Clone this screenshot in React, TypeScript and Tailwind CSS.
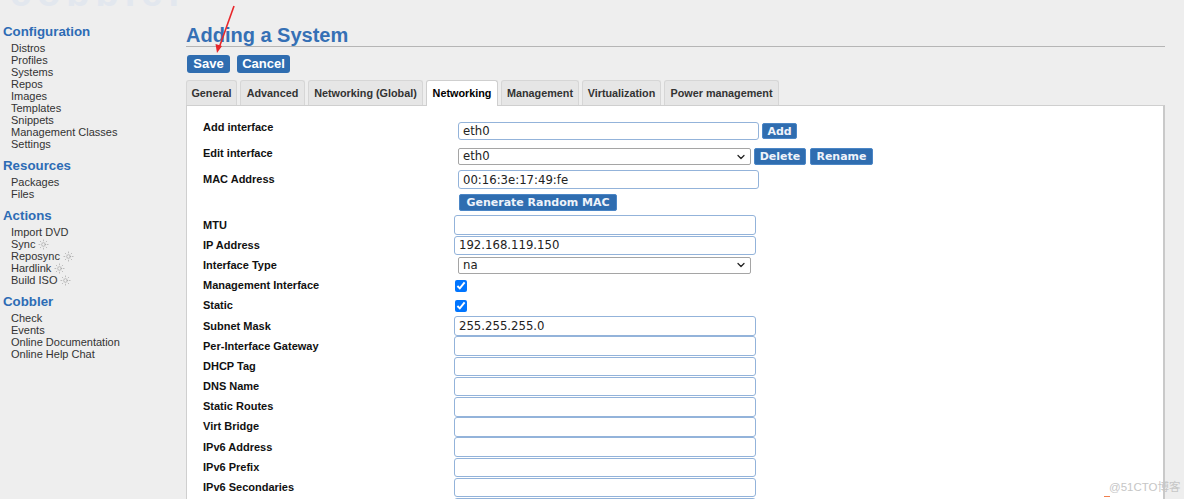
import { ChevronDown, Sun } from "lucide-react";

const sections = [
  {
    title: "Configuration",
    links: ["Distros", "Profiles", "Systems", "Repos", "Images", "Templates", "Snippets", "Management Classes", "Settings"],
  },
  { title: "Resources", links: ["Packages", "Files"] },
  { title: "Actions", links: ["Import DVD", "Sync*", "Reposync*", "Hardlink*", "Build ISO*"] },
  { title: "Cobbler", links: ["Check", "Events", "Online Documentation", "Online Help Chat"] },
];

const tabs: { name: string; w: string }[] = [
  { name: "General", w: "w-[51px]" },
  { name: "Advanced", w: "w-[65px]" },
  { name: "Networking (Global)", w: "w-[115px]" },
  { name: "Networking", w: "w-[72px]" },
  { name: "Management", w: "w-[78px]" },
  { name: "Virtualization", w: "w-[79px]" },
  { name: "Power management", w: "w-[115px]" },
];

const rows: { label: string; kind: "input" | "select" | "check"; value?: string }[] = [
  { label: "MTU", kind: "input" },
  { label: "IP Address", kind: "input", value: "192.168.119.150" },
  { label: "Interface Type", kind: "select", value: "na" },
  { label: "Management Interface", kind: "check" },
  { label: "Static", kind: "check" },
  { label: "Subnet Mask", kind: "input", value: "255.255.255.0" },
  { label: "Per-Interface Gateway", kind: "input" },
  { label: "DHCP Tag", kind: "input" },
  { label: "DNS Name", kind: "input" },
  { label: "Static Routes", kind: "input" },
  { label: "Virt Bridge", kind: "input" },
  { label: "IPv6 Address", kind: "input" },
  { label: "IPv6 Prefix", kind: "input" },
  { label: "IPv6 Secondaries", kind: "input" },
  { label: "", kind: "input" },
];

function SmallButton({ children }: { children: React.ReactNode }) {
  return (
    <div className="flex items-center justify-center h-full px-[5px] bg-[#2f6db0] border border-[#4b86c6] rounded-[2px] text-[#eef3fa] font-bold text-[11px] leading-none font-['DejaVu_Sans',sans-serif] whitespace-nowrap">
      {children}
    </div>
  );
}

function TextBox({ value, className }: { value?: string; className: string }) {
  return (
    <input
      readOnly
      value={value ?? ""}
      className={`border border-[#93b3da] rounded-[3px] bg-white px-[4px] text-[11.7px] font-normal text-[#222] font-['DejaVu_Sans',sans-serif] outline-none ${className}`}
    />
  );
}

function SelectBox({ value, className }: { value: string; className: string }) {
  return (
    <div
      className={`flex items-center justify-between border border-[#a5a5a5] rounded-[2px] bg-white pl-[4px] pr-[3px] text-[11.7px] font-normal text-[#222] font-['DejaVu_Sans',sans-serif] ${className}`}
    >
      <span>{value}</span>
      <ChevronDown size={12} strokeWidth={2.5} className="text-[#222]" />
    </div>
  );
}

export default function App() {
  return (
    <div className="relative h-[499px] overflow-hidden bg-[#eeeeee] font-['Liberation_Sans',Arial,sans-serif]">
      <div className="flex">
        {/* sidebar */}
        <div className="w-[186px] shrink-0">
          <div className="h-[9px] overflow-hidden pl-[10px]">
            <div className="-mt-[26px] text-[38px] font-bold tracking-[6px] text-[#e2e7ee] leading-[38px] whitespace-nowrap">cobbler</div>
          </div>
          <div className="pl-[3px] pt-[15px]">
            {sections.map((s) => (
              <div key={s.title} className="mb-[8px]">
                <div className="h-[16px] leading-[16px] text-[13.3px] font-bold text-[#2d6cb5]">{s.title}</div>
                <div className="mt-[2px] pl-[8px]">
                  {s.links.map((l) => {
                    const sun = l.endsWith("*");
                    return (
                      <div key={l} className="flex items-center gap-[3px] h-[12px] leading-[12px] text-[11px] text-[#333]">
                        {sun ? l.slice(0, -1) : l}
                        {sun && <Sun size={11} strokeWidth={1.3} className="text-[#999]" />}
                      </div>
                    );
                  })}
                </div>
              </div>
            ))}
          </div>
        </div>

        {/* main */}
        <div className="flex-1 pr-[19px]">
          <div className="mt-[22px] h-[25px] leading-[27px] border-b border-[#b5b5b5] text-[20px] font-bold text-[#3570b5]">
            Adding a System
          </div>
          <div className="flex gap-[7px] mt-[8px] ml-[1px]">
            <div className="h-[18px] w-[43px] flex items-center justify-center bg-[#2f6db0] rounded-[3px] text-white font-bold text-[13px]">Save</div>
            <div className="h-[18px] w-[53px] flex items-center justify-center bg-[#2f6db0] rounded-[3px] text-white font-bold text-[13px]">Cancel</div>
          </div>

          <div className="flex gap-[3px] mt-[7px] h-[25px]">
            {tabs.map((t) => {
              const active = t.name === "Networking";
              return (
                <div
                  key={t.name}
                  className={
                    active
                      ? `relative z-10 h-[26px] ${t.w} flex items-center justify-center bg-white border border-b-0 border-[#cfcfcf] rounded-t-[3px] text-[10.8px] font-bold text-black whitespace-nowrap`
                      : `h-[25px] ${t.w} flex items-center justify-center bg-[#e6e6e6] border border-b-0 border-[#d6d6d6] rounded-t-[3px] text-[10.8px] font-bold text-[#333] whitespace-nowrap`
                  }
                >
                  {t.name}
                </div>
              );
            })}
          </div>

          <div className="bg-white border-l border-t border-[#cfcfcf] border-r-2 border-r-[#c9c9c9] pl-[16px] pt-[14px] text-[11px] font-bold text-[#111]">
            {/* add interface */}
            <div className="flex h-[26px] items-start">
              <div className="w-[255px] pt-[1px] leading-[13px]">Add interface</div>
              <TextBox value="eth0" className="w-[301px] h-[18px] mt-[2px]" />
              <div className="ml-[3px] mt-[3px] h-[16px] w-[35px]">
                <SmallButton>Add</SmallButton>
              </div>
            </div>
            {/* edit interface */}
            <div className="flex h-[22px] items-start">
              <div className="w-[255px] pt-[1px] leading-[13px]">Edit interface</div>
              <SelectBox value="eth0" className="w-[293px] h-[17px] mt-[2px]" />
              <div className="ml-[3px] mt-[2px] h-[17px] w-[52px]">
                <SmallButton>Delete</SmallButton>
              </div>
              <div className="ml-[4px] mt-[2px] h-[17px] w-[63px]">
                <SmallButton>Rename</SmallButton>
              </div>
            </div>
            {/* mac */}
            <div className="flex h-[24px] items-start">
              <div className="w-[255px] pt-[5px] leading-[13px]">MAC Address</div>
              <TextBox value="00:16:3e:17:49:fe" className="w-[301px] h-[19px] mt-[2px]" />
            </div>
            <div className="flex h-[23px] items-start">
              <div className="w-[256px]" />
              <div className="mt-[2px] h-[17px] w-[158px]">
                <SmallButton>Generate Random MAC</SmallButton>
              </div>
            </div>

            {rows.map((r, i) => (
              <div key={i} className="flex h-[20.2px] items-center">
                <div className="w-[251px] leading-[13px]">{r.label}</div>
                {r.kind === "input" && <TextBox value={r.value} className="w-[302px] h-[19.5px]" />}
                {r.kind === "select" && <SelectBox value={r.value ?? ""} className="ml-[4px] w-[293px] h-[17px]" />}
                {r.kind === "check" && (
                  <input type="checkbox" checked readOnly className="ml-[1px] w-[12px] h-[12px] accent-[#0075ff]" />
                )}
              </div>
            ))}
          </div>
        </div>
      </div>

      {/* annotation arrow */}
      <svg className="absolute left-[205px] top-[4px]" width="34" height="52" viewBox="0 0 34 52">
        <line x1="29" y1="2" x2="14" y2="44" stroke="#e8262a" strokeWidth="1.6" />
        <polygon points="12,49 10.5,40 17,42" fill="#e8262a" />
      </svg>

      {/* watermark */}
      <div className="absolute left-[1109px] top-[479px] whitespace-nowrap text-[11.5px] text-[#c6c6c6] font-['Liberation_Sans','Noto_Sans_CJK_SC',sans-serif]">
        @51CTO博客
      </div>
      <div className="absolute left-[1104px] top-[496px] w-[6px] h-[1px] bg-[#f08050]" />
    </div>
  );
}
